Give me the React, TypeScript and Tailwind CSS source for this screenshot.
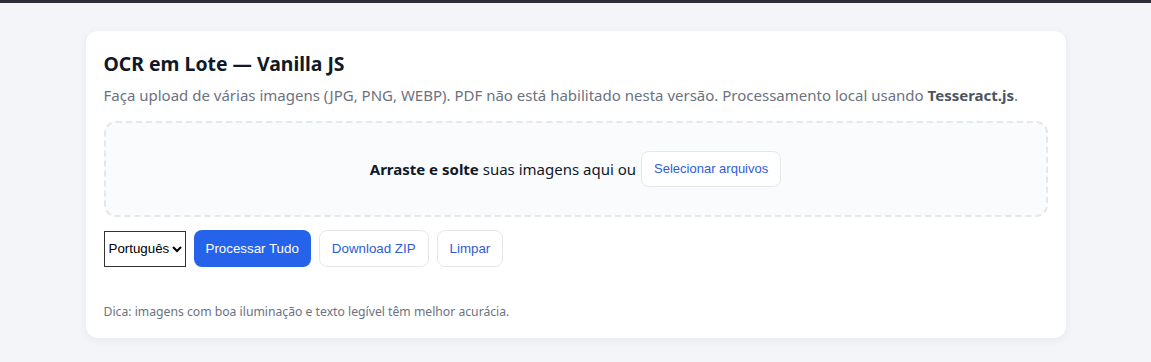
import React from "react";

export default function App() {
  return (
    <div className="min-h-[362px] bg-[#f4f5f9] border-t-[3px] border-[#2e2e3a] font-['Noto_Sans',sans-serif] text-[#111827]">
      <div className="max-w-[980px] mx-auto pt-[28px]">
        <div className="bg-white rounded-[12px] shadow-[0_2px_10px_rgba(20,30,60,0.06)] p-[18px]">
          <h1 className="text-[19.4px] font-bold leading-[28px] mt-[1px]">OCR em Lote — Vanilla JS</h1>
          <p className="text-[15px] text-[#6b7280] mt-[5px] leading-[24px]">
            Faça upload de várias imagens (JPG, PNG, WEBP). PDF não está habilitado nesta versão. Processamento local usando{" "}
            <b className="text-[#4b5563]">Tesseract.js</b>.
          </p>
          <div className="mt-[14px] border-2 border-dashed border-[#e5e7eb] rounded-[12px] bg-[#fafbfd] h-[96px] flex items-center justify-center gap-[5px]">
            <span className="text-[15px]">
              <b>Arraste e solte</b> suas imagens aqui ou
            </span>
            <button className="font-['Liberation_Sans',Arial,sans-serif] text-[13px] text-[#2f5bd8] bg-white border border-[#e5e7eb] rounded-[8px] h-[36px] px-[12px]">
              Selecionar arquivos
            </button>
          </div>
          <div className="mt-[13px] flex items-center gap-[8px] font-['Liberation_Sans',Arial,sans-serif] text-[13.33px]">
            <select className="h-[36px] w-[82px] border border-[#333] bg-white text-black">
              <option>Português</option>
            </select>
            <button className="h-[37px] px-[12px] rounded-[8px] bg-[#2563eb] text-white">Processar Tudo</button>
            <button className="h-[37px] px-[12px] rounded-[8px] bg-white border border-[#e5e7eb] text-[#2f5bd8]">Download ZIP</button>
            <button className="h-[37px] px-[12px] rounded-[8px] bg-white border border-[#e5e7eb] text-[#2f5bd8]">Limpar</button>
          </div>
          <p className="mt-[37px] text-[12.2px] text-[#6b7280] leading-[16px]">
            Dica: imagens com boa iluminação e texto legível têm melhor acurácia.
          </p>
        </div>
      </div>
    </div>
  );
}
